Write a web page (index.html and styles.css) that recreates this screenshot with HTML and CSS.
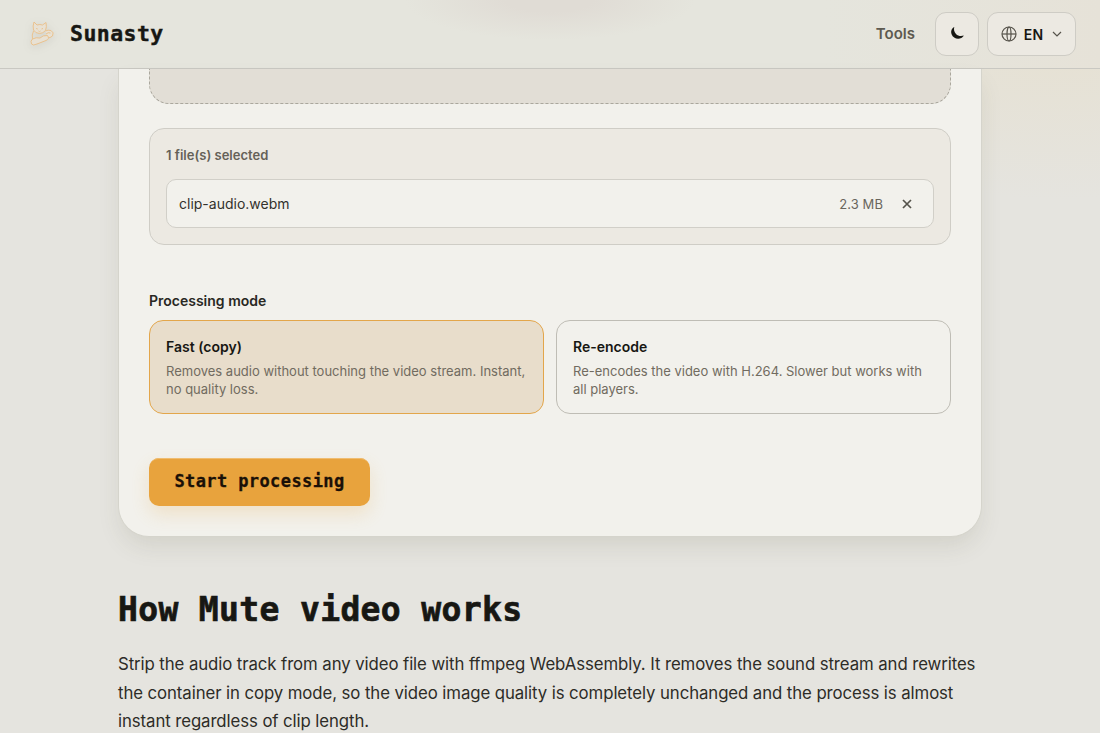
FILE: index.html
```html
<!DOCTYPE html>
<html lang="en">
    <head>
        <meta charset="UTF-8">
        <meta name="viewport" content="width=device-width, initial-scale=1.0">
        <title>Mute video - Sunasty</title>
        <link rel="stylesheet" href="styles.css">
    </head>
    <body>
        <header class="header">
            <a class="brand" href="#">
                <svg class="logo" viewBox="0 0 28 28" aria-hidden="true">
                    <path d="M5.5 10 Q4.5 6 6 2 L9 5 Q12 4 14.5 5 L18 2.5 Q19 7 17.5 10.5 Q15 13.5 11.5 13.5 Q7.5 13.5 5.5 10 Z"/>
                    <path d="M5.5 11 Q3.5 15 4.5 19 M17.5 11 Q20 9.500 23 10.500 Q26.500 12.500 24.500 16 Q22.500 18 19 18"/>
                    <path d="M4.500 19 Q2 21 3.500 24 Q5 26 9 24 L18 20.500 Q22 19 19.500 15.500 Q15 15 12 18 Q8 17 4.500 19 Z"/>
                    <path d="M8.200 8.500 l1.500 .5 M13.500 9 l1.500 -.5 M10.500 11 l1 .7 l1 -.7 M18 14 Q20 12 22.500 13"/>
                </svg>
                <span class="brand-name">Sunasty</span>
            </a>
            <nav class="nav">
                <a class="nav-link" href="#">Tools</a>
                <button class="theme-btn" aria-label="Toggle theme">
                    <svg width="16" height="16" viewBox="0 0 16 16"><path d="M5.300 1 C2.700 2.200 1.500 5.200 2.600 8.200 C4 12 8.500 13.900 12.300 12 C13.500 11.300 14.500 10.300 14.700 9.400 C12.500 10.300 9 10.100 7 7.900 C5 5.700 4.600 3.500 5.300 1 Z" fill="currentColor"/></svg>
                </button>
                <button class="lang-btn">
                    <svg width="16" height="16" viewBox="0 0 16 16" fill="none" stroke="currentColor" stroke-width="1.2"><circle cx="8" cy="8" r="7"/><ellipse cx="8" cy="8" rx="2" ry="7"/><path d="M1 8 h14"/></svg>
                    <span>EN</span>
                    <svg class="chevron" width="10" height="10" viewBox="0 0 10 10" fill="none" stroke="currentColor" stroke-width="1.2"><path d="M1 3 l4 4 l4 -4"/></svg>
                </button>
            </nav>
        </header>
        <main class="page">
            <section class="card">
                <div class="dropzone"></div>
                <div class="files">
                    <p class="files-title">1 file(s) selected</p>
                    <div class="file">
                        <span class="file-name">clip-audio.webm</span>
                        <span class="file-size">2.3 MB</span>
                        <button class="remove" aria-label="Remove">
                            <svg width="10" height="10" viewBox="0 0 10 10" fill="none" stroke="currentColor" stroke-width="1.7"><path d="M1 1 l8 8 M9 1 l-8 8"/></svg>
                        </button>
                    </div>
                </div>
                <h2 class="label">Processing mode</h2>
                <div class="modes">
                    <div class="mode active">
                        <h3>Fast (copy)</h3>
                        <p>Removes audio without touching the video stream. Instant, no quality loss.</p>
                    </div>
                    <div class="mode">
                        <h3>Re-encode</h3>
                        <p>Re-encodes the video with H.264. Slower but works with all players.</p>
                    </div>
                </div>
                <button class="start">Start processing</button>
            </section>
            <section class="about">
                <h2>How Mute video works</h2>
                <p>Strip the audio track from any video file with ffmpeg WebAssembly. It removes the sound stream and rewrites the container in copy mode, so the video image quality is completely unchanged and the process is almost instant regardless of clip length.</p>
            </section>
        </main>
    </body>
</html>
```
FILE: styles.css
```css
* {
    box-sizing: border-box;
}

body {
    margin: 0;
    height: 100vh;
    overflow: hidden;
    font-family: Inter, sans-serif;
    color: #171713;
    background: radial-gradient(ellipse 300px 150px at 1060px 50px, #e6e1d3, transparent) #e5e4df;
}

button {
    font: inherit;
    color: inherit;
    padding: 0;
}

h2, h3, p {
    margin: 0;
}

.header {
    height: 69px;
    padding: 0 24px 0 28px;
    display: flex;
    align-items: center;
    justify-content: space-between;
    border-bottom: 1px solid #c9c8c2;
    background: radial-gradient(ellipse 145px 40px at 550px 0, #e0dcd5 30%, rgba(224, 220, 213, 0)), linear-gradient(90deg, #e5e5dd 75%, #e6e2d8);
}

.brand {
    display: flex;
    align-items: center;
    gap: 14px;
    color: inherit;
    text-decoration: none;
}

.logo {
    width: 28px;
    height: 28px;
    fill: #e8e1d4;
    stroke: #e9c18d;
    stroke-width: 1;
    filter: drop-shadow(0 2px 4px rgba(90, 85, 70, 0.12));
}

.brand-name {
    font: bold 21.5px/28px "DejaVu Sans Mono", monospace;
    letter-spacing: 0.45px;
    -webkit-text-stroke: 0.4px;
}

.nav {
    display: flex;
    align-items: center;
    gap: 8px;
}

.nav-link {
    margin-right: 12px;
    padding-bottom: 1px;
    font-size: 15px;
    font-weight: 600;
    color: #5d5a50;
    text-decoration: none;
}

.theme-btn,
.lang-btn {
    height: 44px;
    display: flex;
    align-items: center;
    justify-content: center;
    border: 1px solid #ceccc5;
    border-radius: 11px;
    background: #ece9e2;
}

.theme-btn {
    width: 44px;
}

.lang-btn {
    width: 89px;
    gap: 7px;
    font-size: 14px;
    font-weight: 600;
    letter-spacing: 0.3px;
}

.lang-btn svg {
    color: #56534b;
}

.chevron {
    margin-left: 2px;
}

.page {
    width: 864px;
    margin: 0 auto;
}

.card {
    height: 468px;
    padding: 0 30px;
    border: 1px solid #d5d4cc;
    border-top: 0;
    border-radius: 0 0 31px 31px;
    background: #f2f1ec;
    box-shadow: 0 12px 24px -4px rgba(80, 80, 50, 0.13);
}

.dropzone {
    height: 35px;
    border: 1px dashed #aaa79d;
    border-top: 0;
    border-radius: 0 0 20px 20px;
    background: #e2ded6;
}

.files {
    height: 117px;
    margin-top: 24px;
    padding: 16px;
    border: 1px solid #cfcdc6;
    border-radius: 15px;
    background: #ece9e2;
}

.files-title {
    font-size: 13px;
    font-weight: 600;
    line-height: 21px;
    color: #656158;
}

.file {
    height: 49px;
    margin-top: 13px;
    padding: 0 12px;
    display: flex;
    align-items: center;
    border: 1px solid #d1cfc8;
    border-radius: 10px;
    background: #f2f1ec;
}

.file-name {
    flex: 1;
    font-size: 14px;
    color: #33322d;
}

.file-size {
    font-size: 13px;
    letter-spacing: 0.1px;
    color: #69665d;
}

.remove {
    width: 28px;
    height: 28px;
    margin-left: 10px;
    display: grid;
    place-items: center;
    border: 0;
    background: none;
    color: #55534b;
}

.label {
    margin-top: 45px;
    font-size: 14px;
    font-weight: 600;
    line-height: 22px;
    color: #292823;
}

.modes {
    margin-top: 8px;
    display: grid;
    grid-template-columns: 1fr 1fr;
    gap: 12px;
}

.mode {
    height: 94px;
    padding: 15px 16px;
    border: 1px solid #bfbdb5;
    border-radius: 14px;
}

.mode.active {
    border-color: #e3a64b;
    background: #e8ddcb;
}

.mode h3 {
    font-size: 14px;
    font-weight: 600;
    line-height: 22px;
}

.mode p {
    margin-top: 4px;
    font-size: 13px;
    line-height: 18px;
    color: #716b60;
}

.start {
    width: 221px;
    height: 48px;
    margin-top: 44px;
    border: 0;
    border-radius: 10px;
    background: #e8a33d;
    color: #1b1007;
    font: bold 17px/44px "DejaVu Sans Mono", monospace;
    letter-spacing: 0.4px;
    padding-bottom: 2px;
    -webkit-text-stroke: 0.3px;
    box-shadow: inset 0 2px 0 -1px #f0bd70, 0 8px 18px rgba(232, 163, 61, 0.2);
}

.about h2 {
    margin-top: 53px;
    font: bold 33px/40px "DejaVu Sans Mono", monospace;
    letter-spacing: 0.35px;
    -webkit-text-stroke: 0.7px;
}

.about p {
    margin-top: 20px;
    font-size: 16.8px;
    letter-spacing: -0.09px;
    line-height: 28.6px;
    color: #2d2c27;
}
```
